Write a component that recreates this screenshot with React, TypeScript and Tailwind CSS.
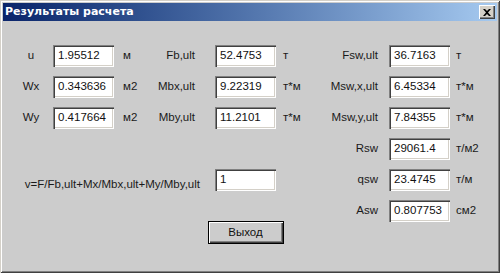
import React from "react";

const Box = ({ v, className = "" }: { v: string; className?: string }) => (
  <div
    className={
      "h-[22px] bg-white flex items-center pl-[5px] pb-[1px] text-[11.5px] text-[#111] shadow-[inset_1px_1px_#808080,inset_2px_2px_#404040,inset_-1px_-1px_#ffffff,inset_-2px_-2px_#d4d0c8] " +
      className
    }
  >
    {v}
  </div>
);

const Label = ({ t, className = "" }: { t: string; className?: string }) => (
  <div className={"flex items-center text-[11.5px] text-[#1a1a1a] " + className}>{t}</div>
);

export default function App() {
  const rows3: [string, string, string, string, string, string, string, string, string][] = [
    ["u", "1.95512", "м", "Fb,ult", "52.4753", "т", "Fsw,ult", "36.7163", "т"],
    ["Wx", "0.343636", "м2", "Mbx,ult", "9.22319", "т*м", "Msw,x,ult", "6.45334", "т*м"],
    ["Wy", "0.417664", "м2", "Mby,ult", "11.2101", "т*м", "Msw,y,ult", "7.84355", "т*м"],
  ];
  return (
    <div className="w-[500px] h-[273px] bg-[#cccccc] p-[3px] flex flex-col font-['Liberation_Sans',Arial,sans-serif] shadow-[inset_1px_1px_#d4d0c8,inset_-1px_-1px_#404040,inset_2px_2px_#ffffff,inset_-2px_-2px_#808080]">
      <div className="h-[18px] flex items-center justify-between bg-gradient-to-r from-[#0a246a] to-[#a6caf0]">
        <span className="pl-[2px] text-white font-bold text-[11px] font-['DejaVu_Sans',sans-serif] tracking-[0px]">
          Результаты расчета
        </span>
        <div className="mr-[2px] w-[16px] h-[14px] bg-[#d4d0c8] flex items-center justify-center shadow-[inset_1px_1px_#ffffff,inset_-1px_-1px_#404040,inset_-2px_-2px_#808080]">
          <svg width="8" height="7" viewBox="0 0 8 7">
            <path d="M0 0h2l2 2 2-2h2L5 3.5 8 7H6L4 5 2 7H0l3-3.5z" fill="#000" />
          </svg>
        </div>
      </div>
      <div className="pt-[24px] grid grid-cols-[50px_61px_36px_65px_61px_44px_69px_61px_47px] auto-rows-[22px] gap-y-[9px]">
        {rows3.map((r, i) => (
          <React.Fragment key={i}>
            <Label t={r[0]} className="justify-center pl-[6px]" />
            <Box v={r[1]} />
            <Label t={r[2]} className="pl-[9px]" />
            <Label t={r[3]} className="justify-end pr-[20px]" />
            <Box v={r[4]} />
            <Label t={r[5]} className="pl-[7px]" />
            <Label t={r[6]} className="justify-end pr-[11px]" />
            <Box v={r[7]} />
            <Label t={r[8]} className="pl-[6px]" />
          </React.Fragment>
        ))}
        <div className="col-start-7 flex items-center justify-end pr-[11px] text-[11.5px] text-[#1a1a1a]">Rsw</div>
        <Box v="29061.4" />
        <Label t="т/м2" className="pl-[6px]" />

        <div className="col-span-4 flex items-center justify-end pr-[15px] pt-[10px] text-[11.5px] text-[#1a1a1a]">
          v=F/Fb,ult+Mx/Mbx,ult+My/Mby,ult
        </div>
        <Box v="1" />
        <div />
        <Label t="qsw" className="justify-end pr-[11px]" />
        <Box v="23.4745" />
        <Label t="т/м" className="pl-[6px]" />

        <div className="col-start-7 flex items-center justify-end pr-[11px] text-[11.5px] text-[#1a1a1a]">Asw</div>
        <Box v="0.807753" />
        <Label t="см2" className="pl-[6px]" />

        <div className="col-start-5 justify-self-center -mt-[10px] w-[76px] h-[23px] border border-black bg-[#cccccc] flex items-center justify-center text-[11.5px] text-[#111] shadow-[inset_1px_1px_#ffffff,inset_-1px_-1px_#404040,inset_-2px_-2px_#808080]">
          Выход
        </div>
      </div>
    </div>
  );
}
